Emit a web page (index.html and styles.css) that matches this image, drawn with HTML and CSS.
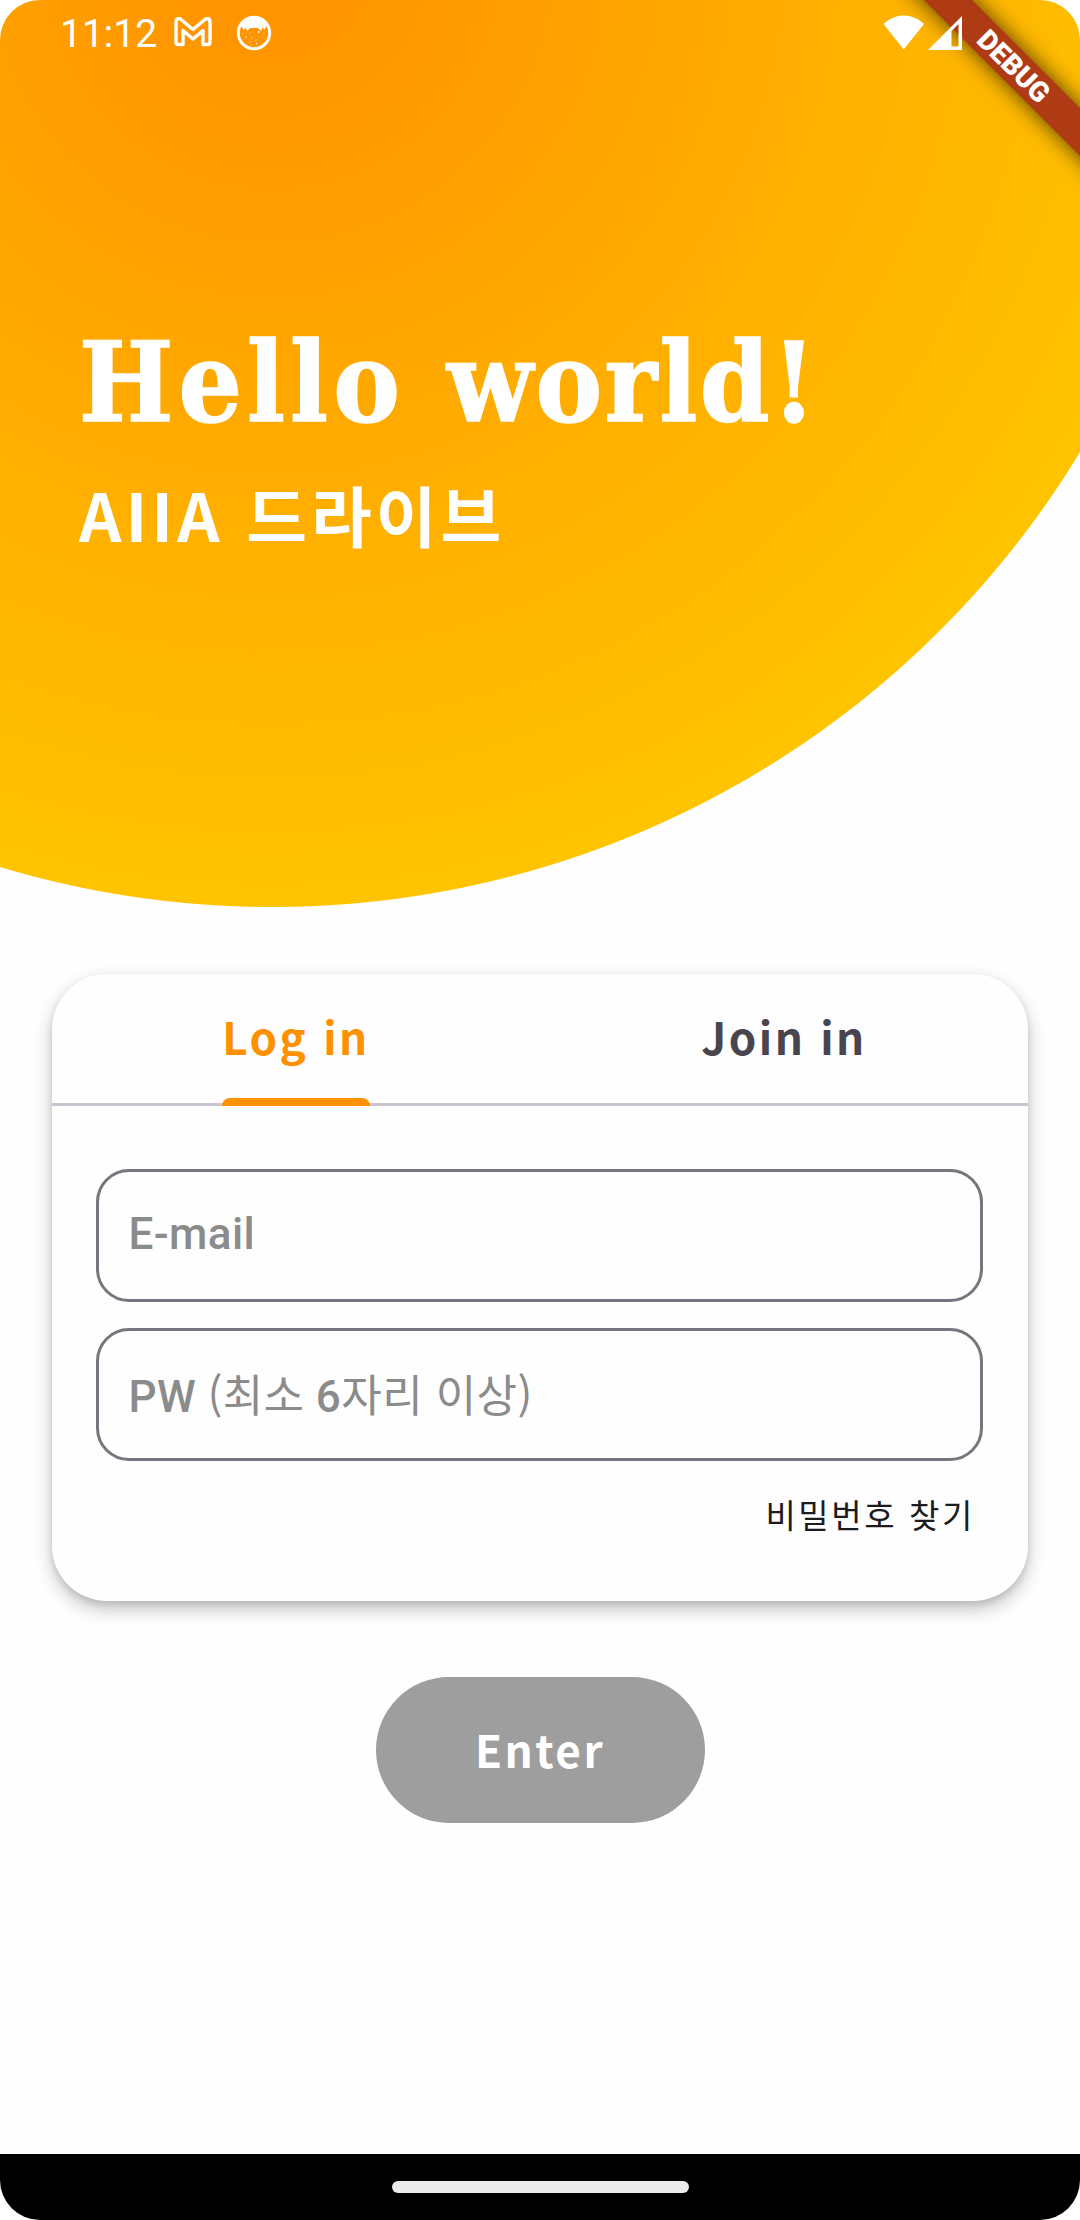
FILE: index.html
```html
<!DOCTYPE html>
<html lang="ko">
<head>
<meta charset="utf-8">
<title>AIIA 드라이브</title>
<link rel="stylesheet" href="styles.css">
</head>
<body>
<div class="screen">
  <div class="debug-banner"><span>DEBUG</span></div>
  <header class="hero">
    <div class="status-bar">
      <span class="clock">11:12</span>
      <svg class="icon-mail" width="38" height="30" viewBox="0 0 38 30" fill="none" stroke="#fff" stroke-width="3.4" stroke-linejoin="round"><path d="M2 25V5Q2 1.5 5 1.5Q6 1.500 7 2.500L19 12.500L31 2.500Q32 1.500 33 1.500Q36 1.500 36 5V25Q36 27.500 34 27.500H29V13.500L19 22L9 13.500V27.500H4Q2 27.500 2 25Z" /></svg>
      <svg class="icon-cat" width="36" height="36" viewBox="0 0 36 36"><circle cx="18" cy="18" r="15.700" fill="none" stroke="#fff" stroke-width="3"/><path d="M5 11Q10 2 18 2T31 11L28 15L26.500 12.500L25 16L22 13H14L11 16L9.500 12.500L8 15Z" fill="#fff"/><g fill="#fff"><circle cx="14" cy="18" r=".5"/><circle cx="22.500" cy="17" r="1"/><circle cx="10" cy="22" r=".8"/><circle cx="16" cy="23" r=".5"/><circle cx="20" cy="25" r=".6"/><circle cx="26" cy="22" r=".5"/><circle cx="14" cy="27" r=".5"/><circle cx="20.500" cy="28.500" r=".7"/><circle cx="6.500" cy="18" r=".4"/><circle cx="28" cy="18" r=".4"/></g></svg>
      <span class="spacer"></span>
      <svg class="icon-wifi" width="42" height="36" viewBox="0 0 42 36"><path d="M.5 9Q9 .5 20.700 .5T41 9L20.700 34.500Z" fill="#fff"/></svg>
      <svg class="icon-signal" width="36" height="36" viewBox="0 0 36 36"><path fill="#fff" fill-rule="evenodd" d="M1 35L35 1V35ZM24.500 16V31.500H31.500V9Z"/></svg>
    </div>
    <div class="titles">
      <h1><span class="wide">Hello</span> world!</h1>
      <p>AIIA 드라이브</p>
    </div>
  </header>
  <main class="content">
    <section class="card">
      <nav class="tabs">
        <div class="tab active"><span>Log in</span></div>
        <div class="tab"><span>Join in</span></div>
      </nav>
      <form class="fields">
        <div class="field"><span>E-mail</span></div>
        <div class="field"><span>PW <span class="kr">(최소</span> 6<span class="kr">자리 이상)</span></span></div>
        <a class="find">비밀번호 찾기</a>
      </form>
    </section>
    <button class="enter" type="button">Enter</button>
  </main>
  <footer class="nav-bar"><div class="handle"></div></footer>
</div>
</body>
</html>
```
FILE: styles.css
```css
* { box-sizing: border-box; }

body {
  margin: 0;
  background: #fff;
}

.screen {
  position: relative;
  display: flex;
  flex-direction: column;
  width: 1080px;
  height: 2220px;
  overflow: hidden;
  border-radius: 40px;
  background: #fefefe;
  font-family: "Noto Sans CJK KR", sans-serif;
}

.hero {
  height: 908px;
  color: #fff;
  background: radial-gradient(circle 946px at 272px -38px, #ff9100 0, #ffc400 944.5px, transparent 945.5px);
}

.status-bar {
  position: relative;
  z-index: 2;
  display: flex;
  align-items: flex-start;
  height: 66px;
  padding: 15px 117px 0 60px;
}

.clock {
  width: 114px;
  margin-top: -4px;
  font: 400 39px/46px Roboto, sans-serif;
  white-space: nowrap;
}

.icon-mail { margin-top: 2px; }
.icon-cat { margin-left: 24px; }
.spacer { flex: 1; }
.icon-signal { margin-left: 2px; }

.titles { padding: 246px 0 0 79px; }

h1 {
  margin: 0;
  font: 700 111px/140px "DejaVu Serif Condensed", "DejaVu Serif", serif;
  letter-spacing: 2.4px;
  word-spacing: 5px;
  white-space: nowrap;
  -webkit-text-stroke: 1.5px #fff;
}

.wide { letter-spacing: 5.1px; }

.titles p {
  margin: 13px 0 0;
  font-size: 66px;
  font-weight: 700;
  line-height: 96px;
  letter-spacing: 4.1px;
}

.debug-banner {
  position: absolute;
  z-index: 1;
  top: 49px;
  left: 854px;
  display: flex;
  justify-content: center;
  align-items: center;
  width: 320px;
  height: 34px;
  transform: rotate(45deg);
  background: #ae3b14;
  box-shadow: 0 0 22px rgba(0, 0, 0, 0.7);
  color: #fff;
  font: 900 28px/33px Roboto, sans-serif;
}

.content {
  display: flex;
  flex: 1;
  flex-direction: column;
  align-items: center;
  padding-top: 65.5px;
}

.card {
  width: 976px;
  height: 627px;
  border-radius: 55px;
  background: #fefefe;
  box-shadow: 0 8px 18px rgba(0, 0, 0, 0.24), 0 3px 6px rgba(0, 0, 0, 0.1);
}

.tabs {
  display: flex;
  height: 132px;
  border-bottom: 3px solid #cac4d0;
}

.tab {
  display: flex;
  flex: 1;
  justify-content: center;
  color: #49454f;
  font-size: 44px;
  font-weight: 700;
  line-height: 125px;
  letter-spacing: 2.5px;
}

.active { color: #ff9100; }

.active span {
  display: flex;
  flex-direction: column;
  justify-content: space-between;
  height: 132px;
}

.active span::after {
  content: "";
  height: 8px;
  flex: none;
  margin-top: -1px;
  border-radius: 8px 8px 0 0;
  background: #ff9100;
}

.fields {
  display: flex;
  flex-direction: column;
  gap: 26.5px;
  padding: 63.5px 45px 0 44px;
}

.field {
  height: 132.5px;
  padding-left: 29.5px;
  border: 3px solid #79747e;
  border-radius: 33px;
  color: #8b8b8b;
  font: 500 44px/125px Roboto, sans-serif;
  letter-spacing: 0.4px;
  white-space: nowrap;
}

.kr {
  font-family: "Noto Sans CJK KR", sans-serif;
  font-weight: 400;
}

.find {
  align-self: flex-end;
  margin: 3px 8px 0 0;
  color: #1d1b20;
  font-size: 33px;
  line-height: 48px;
  letter-spacing: 2.6px;
}

.enter {
  width: 329px;
  height: 146px;
  margin-top: 76.5px;
  padding: 0 0 2px;
  border: 0;
  border-radius: 73px;
  background: #9e9e9e;
  color: #fff;
  font: 700 44px/60px "Noto Sans CJK KR", sans-serif;
  letter-spacing: 2.5px;
}

.nav-bar {
  display: flex;
  justify-content: center;
  height: 66px;
  padding-top: 27px;
  background: #000;
}

.handle {
  width: 297px;
  height: 12px;
  border-radius: 6px;
  background: #ebebeb;
}
```
